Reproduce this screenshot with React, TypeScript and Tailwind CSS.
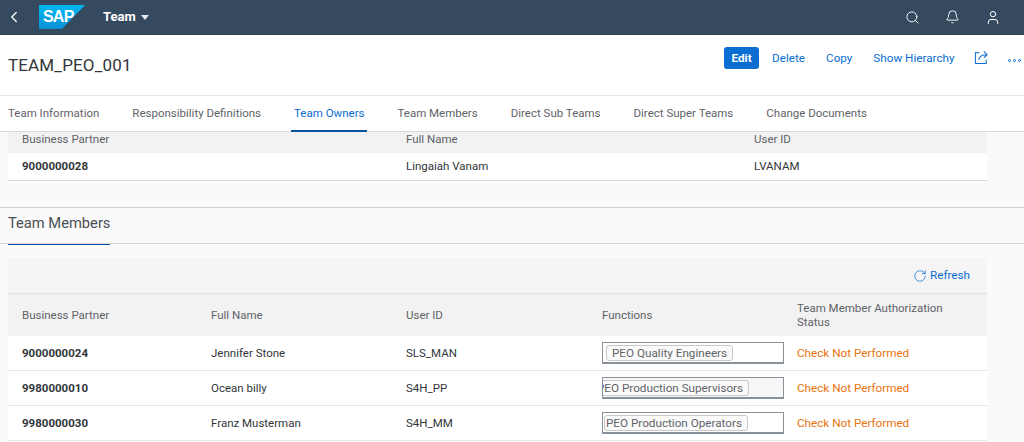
import React from "react";
import { ChevronLeft, Search, Bell, User, RotateCw } from "lucide-react";

const tabs = ["Team Information", "Responsibility Definitions", "Team Owners", "Team Members", "Direct Sub Teams", "Direct Super Teams", "Change Documents"];
const members = [
  ["9000000024", "Jennifer Stone", "SLS_MAN", "PEO Quality Engineers", 0],
  ["9980000010", "Ocean billy", "S4H_PP", "PEO Production Supervisors", 1],
  ["9980000030", "Franz Musterman", "S4H_MM", "PEO Production Operators", 2],
] as const;

function Logo() {
  return (
    <div className="relative w-[46px] h-[24px]">
      <svg viewBox="0 0 46 24" className="absolute inset-0 w-[46px] h-[24px]">
        <defs>
          <linearGradient id="g" x1="0" y1="0" x2="0" y2="1">
            <stop offset="0" stopColor="#00b8f1" />
            <stop offset="1" stopColor="#0a8fd6" />
          </linearGradient>
        </defs>
        <polygon points="0,0 46,0 23,24 0,24" fill="url(#g)" />
      </svg>
      <span className="absolute left-[4px] top-[4px] text-[16px] leading-[16px] font-bold text-white tracking-[-0.8px] font-['Liberation_Sans',sans-serif]">SAP</span>
    </div>
  );
}

export default function App() {
  return (
    <div className="w-[1024px] h-[442px] overflow-hidden bg-[#fafafa] text-[11.5px] text-[#32363a] font-['Roboto',sans-serif]">
      <header className="h-[35px] bg-[#354a5f] border-b border-[#2d4053] flex items-center text-white">
        <ChevronLeft className="ml-[5px] w-[18px] h-[18px]" strokeWidth={1.75} />
        <div className="ml-[16px]"><Logo /></div>
        <span className="ml-[18px] text-[13px] font-bold">Team</span>
        <span className="ml-[5px] mt-[1px] w-0 h-0 border-x-[4px] border-x-transparent border-t-[5px] border-t-[#e4e9ee]" />
        <div className="ml-auto flex items-center">
          <Search className="w-[15px] h-[15px] mr-[25px]" strokeWidth={1.5} />
          <Bell className="w-[15px] h-[16px] mr-[25px]" strokeWidth={1.5} />
          <User className="w-[16px] h-[17px] mr-[23px]" strokeWidth={1.5} />
        </div>
      </header>

      <section className="h-[61px] bg-white border-b border-[#e5e5e5] flex items-start pl-[8px]">
        <h1 className="mt-[17px] text-[17px] leading-[26px] font-normal tracking-[0.15px]">TEAM_PEO_001</h1>
        <div className="ml-auto mt-[12px] flex items-center text-[#0a6ed1] text-[11.7px] leading-[22px]">
          <button className="w-[35px] h-[22px] rounded-[3px] bg-[#0a6ed1] text-white font-bold">Edit</button>
          <span className="ml-[13px]">Delete</span>
          <span className="ml-[21px]">Copy</span>
          <span className="ml-[21px]">Show Hierarchy</span>
          <svg viewBox="0 0 16 16" className="ml-[19px] w-[15px] h-[15px] -mt-[2px]" fill="none" stroke="#0a6ed1" strokeWidth="1.1">
            <path d="M6 3H1.5v11.5H13V10" />
            <path d="M5 10.5C5.5 7 8 5 13 5M10.5 1.5 14 5l-3.5 3.5" />
          </svg>
          <span className="ml-[19px] mr-[3px] mt-[5px] flex gap-[1.5px]">
            <i className="w-[3.5px] h-[3.5px] rounded-full border border-[#0a6ed1]" />
            <i className="w-[3.5px] h-[3.5px] rounded-full border border-[#0a6ed1]" />
            <i className="w-[3.5px] h-[3.5px] rounded-full border border-[#0a6ed1]" />
          </span>
        </div>
      </section>

      <nav className="h-[36px] bg-white border-b border-[#d9d9d9] flex pl-[8px] gap-[33px] leading-[35px] text-[#5f6368]">
        {tabs.map((t) => (
          <span key={t} className={t === "Team Owners" ? "relative text-[#0a6ed1]" : ""}>
            {t}
            {t === "Team Owners" && <i className="absolute -left-[3px] -right-[3px] -bottom-[1px] h-[2px] bg-[#0854a0]" />}
          </span>
        ))}
      </nav>

      <div className="h-[76px] border-b border-[#d0d0d0] px-[8px]">
        <div className="w-[979px]">
          <div className="grid grid-cols-[384px_348px_1fr] h-[21px] bg-[#f2f2f2] pl-[14px] text-[#5f6368] leading-[14px]">
            <span>Business Partner</span><span>Full Name</span><span>User ID</span>
          </div>
          <div className="grid grid-cols-[384px_348px_1fr] h-[28px] bg-white border-b border-[#d9d9d9] pl-[14px] items-center">
            <b className="font-bold">9000000028</b><span>Lingaiah Vanam</span><span>LVANAM</span>
          </div>
        </div>
      </div>

      <div className="h-[36px] border-b border-[#d9d9d9] px-[8px]">
        <div className="relative w-[102px] h-[36px] text-[14.7px] leading-[30px] text-[#4a4f54] whitespace-nowrap">
          Team Members
          <i className="absolute left-0 right-0 bottom-[-1px] h-px bg-[#0854a0]" />
        </div>
      </div>

      <div className="w-[979px] ml-[8px] mt-[14px]">
        <div className="h-[36px] bg-[#f5f5f5] border-b border-[#e0e0e0] flex items-center justify-end pr-[17px] text-[#0a6ed1] text-[11.7px]">
          <RotateCw className="w-[14px] h-[14px] mr-[3px]" strokeWidth={1.25} />
          Refresh
        </div>
        <div className="grid grid-cols-[189px_195px_196px_195px_1fr] h-[42px] bg-[#f2f2f2] pl-[14px] items-center text-[#5f6368] leading-[14px]">
          <span>Business Partner</span><span>Full Name</span><span>User ID</span><span>Functions</span>
          <span className="w-[160px]">Team Member Authorization Status</span>
        </div>
        {members.map(([id, name, uid, fn, kind]) => (
          <div key={id} className="grid grid-cols-[189px_195px_196px_195px_1fr] h-[35px] bg-white border-b border-[#e5e5e5] pl-[14px] items-center">
            <b className="font-bold pt-[1px]">{id}</b>
            <span className="pt-[1px]">{name}</span>
            <span className="pt-[1px]">{uid}</span>
            <div className={`w-[182px] h-[22px] border border-[#89919a] border-b-2 overflow-hidden flex items-center ${kind === 1 ? "bg-[#f7f7f7]" : "bg-white"}`}>
              <span className={`h-[16px] text-[11.7px] leading-[14px] border border-[#c8c8c8] rounded-[3px] bg-[#fafafa] text-[#5f6368] whitespace-nowrap shrink-0 ${kind === 0 ? "ml-[3px] px-[5px]" : kind === 1 ? "-ml-[12px] px-[5px]" : "ml-[1px] pl-[1px] pr-[5px]"}`}>{fn}</span>
            </div>
            <span className="text-[#e9730c] text-[11.7px] pt-[1px]">Check Not Performed</span>
          </div>
        ))}
      </div>
    </div>
  );
}
